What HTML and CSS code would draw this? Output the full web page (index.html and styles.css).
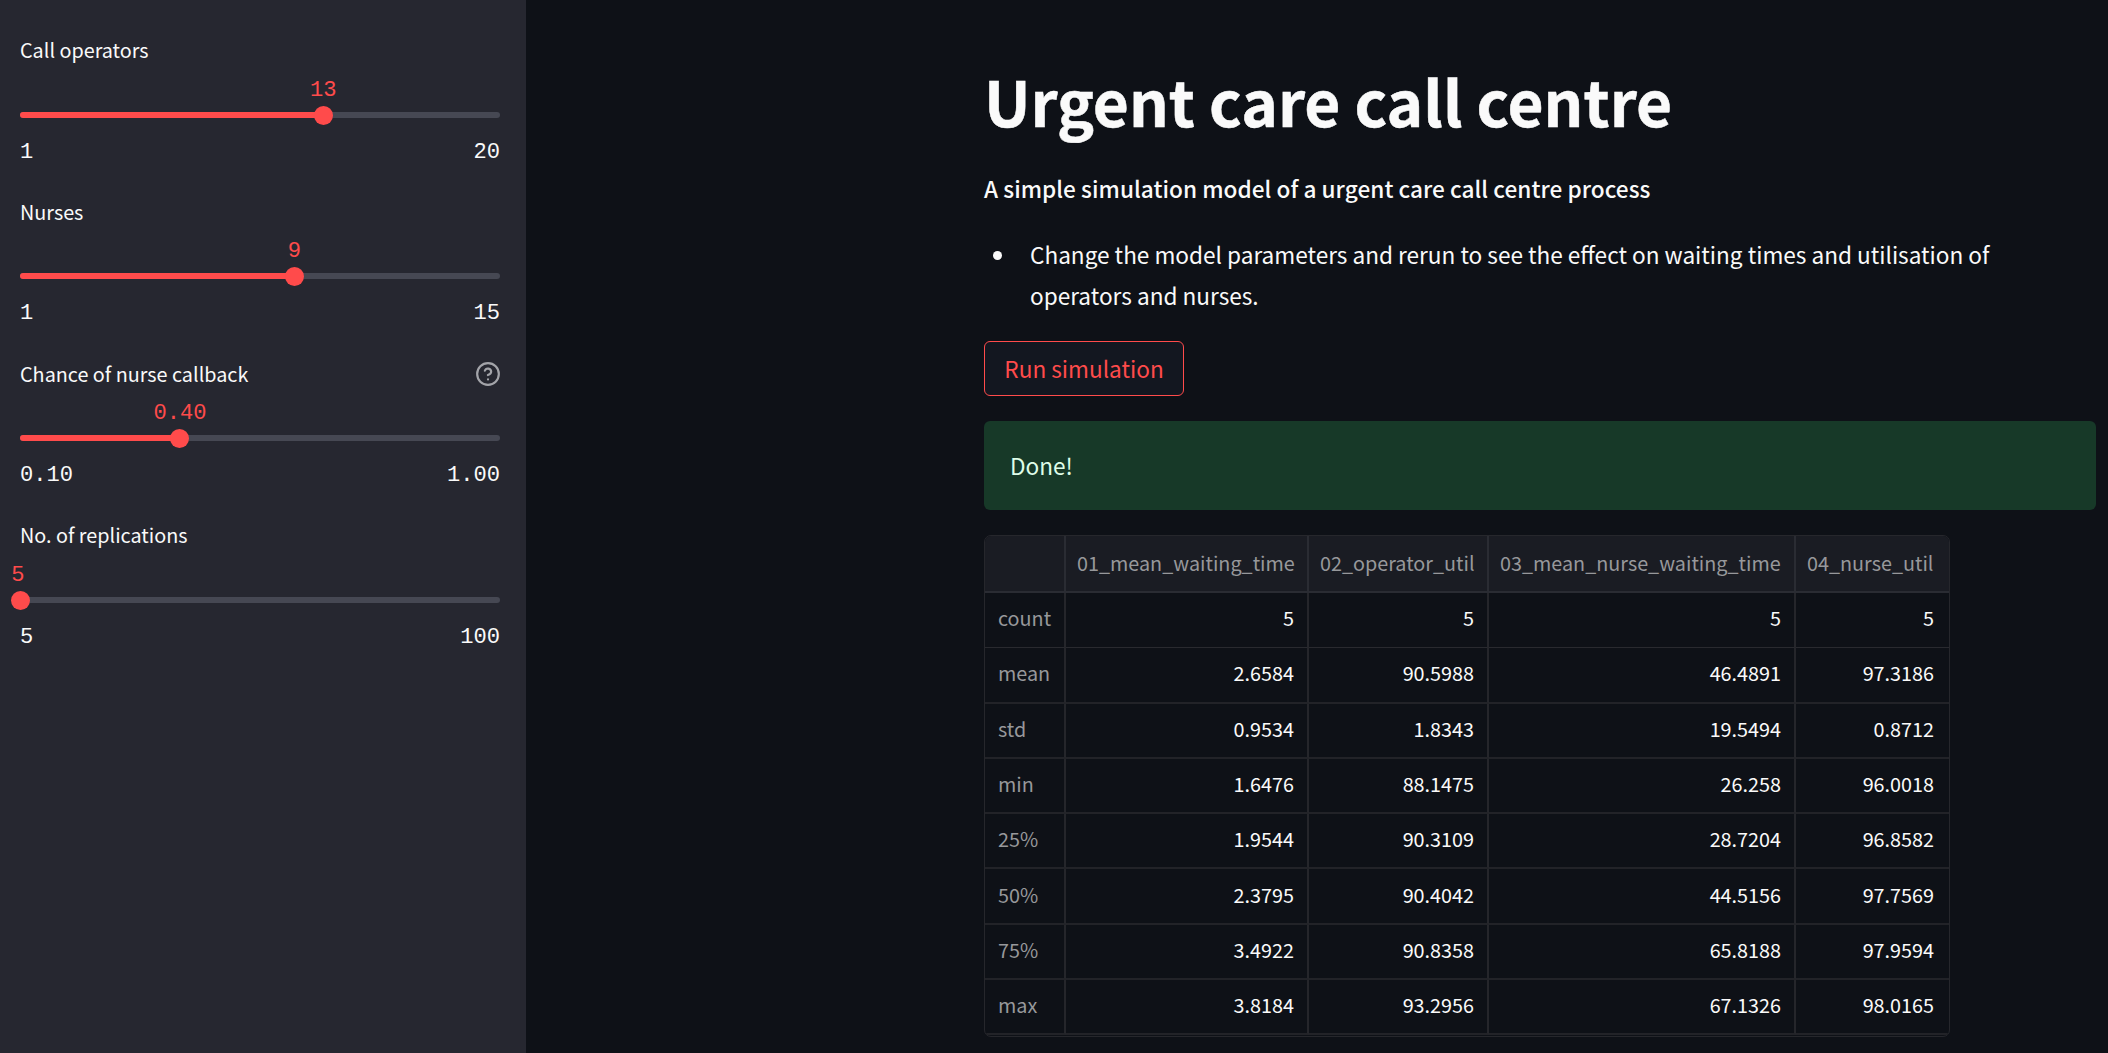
FILE: index.html
```html
<!DOCTYPE html>
<html lang="en">
<head>
<meta charset="utf-8">
<title>Urgent care call centre</title>
<link rel="stylesheet" href="styles.css">
</head>
<body>
<div class="app">
  <aside class="sidebar">
    <section class="slider">
      <div class="label"><span>Call operators</span></div>
      <div class="track" style="--pos:63.158%"><div class="fill"></div><div class="thumb"></div><span class="value">13</span></div>
      <div class="range"><span>1</span><span>20</span></div>
    </section>
    <section class="slider">
      <div class="label"><span>Nurses</span></div>
      <div class="track" style="--pos:57.143%"><div class="fill"></div><div class="thumb"></div><span class="value">9</span></div>
      <div class="range"><span>1</span><span>15</span></div>
    </section>
    <section class="slider">
      <div class="label"><span>Chance of nurse callback</span>
        <svg class="help" viewBox="0 0 24 24" fill="none" stroke="currentColor" stroke-width="2" stroke-linecap="round" stroke-linejoin="round"><circle cx="12" cy="12" r="10"/><path d="M9.09 9a3 3 0 0 1 5.83 1c0 2-3 3-3 3"/><path d="M12 17h.01"/></svg>
      </div>
      <div class="track" style="--pos:33.333%"><div class="fill"></div><div class="thumb"></div><span class="value">0.40</span></div>
      <div class="range"><span>0.10</span><span>1.00</span></div>
    </section>
    <section class="slider">
      <div class="label"><span>No. of replications</span></div>
      <div class="track" style="--pos:0%"><div class="fill"></div><div class="thumb"></div><span class="value value-start">5</span></div>
      <div class="range"><span>5</span><span>100</span></div>
    </section>
  </aside>
  <main class="main">
    <h1>Urgent care call centre</h1>
    <p class="subtitle">A simple simulation model of a urgent care call centre process</p>
    <ul class="notes"><li>Change the model parameters and rerun to see the effect on waiting times and utilisation of<br>operators and nurses.</li></ul>
    <button class="run">Run simulation</button>
    <div class="alert">Done!</div>
    <table class="results">
      <colgroup><col class="c0"><col class="c1"><col class="c2"><col class="c3"><col class="c4"></colgroup>
      <thead><tr><th></th><th>01_mean_waiting_time</th><th>02_operator_util</th><th>03_mean_nurse_waiting_time</th><th>04_nurse_util</th></tr></thead>
      <tbody>
        <tr><th>count</th><td>5</td><td>5</td><td>5</td><td>5</td></tr>
        <tr><th>mean</th><td>2.6584</td><td>90.5988</td><td>46.4891</td><td>97.3186</td></tr>
        <tr><th>std</th><td>0.9534</td><td>1.8343</td><td>19.5494</td><td>0.8712</td></tr>
        <tr><th>min</th><td>1.6476</td><td>88.1475</td><td>26.258</td><td>96.0018</td></tr>
        <tr><th>25%</th><td>1.9544</td><td>90.3109</td><td>28.7204</td><td>96.8582</td></tr>
        <tr><th>50%</th><td>2.3795</td><td>90.4042</td><td>44.5156</td><td>97.7569</td></tr>
        <tr><th>75%</th><td>3.4922</td><td>90.8358</td><td>65.8188</td><td>97.9594</td></tr>
        <tr><th>max</th><td>3.8184</td><td>93.2956</td><td>67.1326</td><td>98.0165</td></tr>
      </tbody>
    </table>
  </main>
</div>
</body>
</html>
```
FILE: styles.css
```css
* { box-sizing: border-box; }
html, body { margin: 0; height: 100%; overflow: hidden; }
body {
  background: #0e1117;
  color: #fafafa;
  font-family: "Noto Sans CJK SC", "Noto Sans", sans-serif;
  font-size: 22.6px;
}
.app { display: flex; height: 1053px; }

.sidebar {
  width: 526px;
  flex: none;
  background: #262730;
  padding: 29.8px 26px 0 20px;
}
.slider { height: 161.67px; }
.label {
  display: flex;
  justify-content: space-between;
  align-items: center;
  height: 40px;
  font-size: 19.8px;
}
.help { width: 26px; height: 26px; margin: 1px -1px 0 0; color: #a3a4a9; }
.track {
  position: relative;
  height: 6px;
  margin-top: 42px;
  border-radius: 3px;
  background: #464853;
}
.fill { width: var(--pos); height: 6px; border-radius: 3px; background: #ff4b4b; }
.thumb {
  position: absolute;
  left: var(--pos);
  top: -6px;
  width: 19px;
  height: 19px;
  margin-left: -9.5px;
  border-radius: 50%;
  background: #ff4b4b;
}
.value, .range {
  font-family: "Liberation Mono", monospace;
  font-size: 22.1px;
  line-height: 30px;
}
.value {
  position: absolute;
  left: var(--pos);
  top: -36px;
  transform: translateX(-50%);
  color: #ff4b4b;
}
.value-start { margin-left: -2px; }
.range { display: flex; justify-content: space-between; margin-top: 20px; }

.main { width: 1112px; margin-left: 458px; padding-top: 58px; }
h1 { margin: 0; font-size: 62.2px; line-height: 84px; font-weight: 700; -webkit-text-stroke: 0.5px #fafafa; }
.subtitle { margin: 27px 0 0; line-height: 40px; font-weight: 500; letter-spacing: 0.05px; }
.notes { margin: 25px 0 0; padding-left: 46px; line-height: 41px; list-style: none; }
.notes li::before {
  content: "";
  float: left;
  width: 9px;
  height: 9px;
  margin: 17px 0 0 -37px;
  border-radius: 50%;
  background: #fafafa;
}
.run {
  display: block;
  width: 200px;
  height: 55px;
  margin-top: 25px;
  padding: 0;
  border: 1px solid #ff4b4b;
  border-radius: 6px;
  background: #131720;
  color: #ff4b4b;
  font: inherit;
}
.alert {
  height: 89px;
  margin-top: 25px;
  padding: 0 26px;
  border-radius: 6px;
  background: #173928;
  color: #dffde9;
  line-height: 89px;
}
.results {
  width: 966px;
  margin-top: 25px;
  padding-bottom: 1px;
  table-layout: fixed;
  border-collapse: separate;
  border-spacing: 0;
  border: 1px solid #26272c;
  border-radius: 7px;
  overflow: hidden;
  font-size: 19.8px;
}
.c0 { width: 81px; }
.c1 { width: 243px; }
.c2 { width: 180px; }
.c3 { width: 307px; }
.c4 { width: 153px; }
th, td {
  height: 55.3px;
  padding: 0 13px 3px 0;
  border-right: 2px solid #25262b;
  border-bottom: 2px solid #222328;
  line-height: 30px;
  white-space: nowrap;
}
tbody tr:first-child > * { padding-bottom: 4px; border-bottom: 1px solid #292a2f; }
td { text-align: right; }
th { color: #97989b; font-weight: 400; text-align: left; }
thead th { height: 57px; padding: 0 0 1px 11px; border-color: #2a2c33; background: #1a1c23; }
tbody th { padding: 0 0 3px 13px; }
th:last-child, td:last-child { border-right: 0; }
td:last-child { padding-right: 15px; }
```
